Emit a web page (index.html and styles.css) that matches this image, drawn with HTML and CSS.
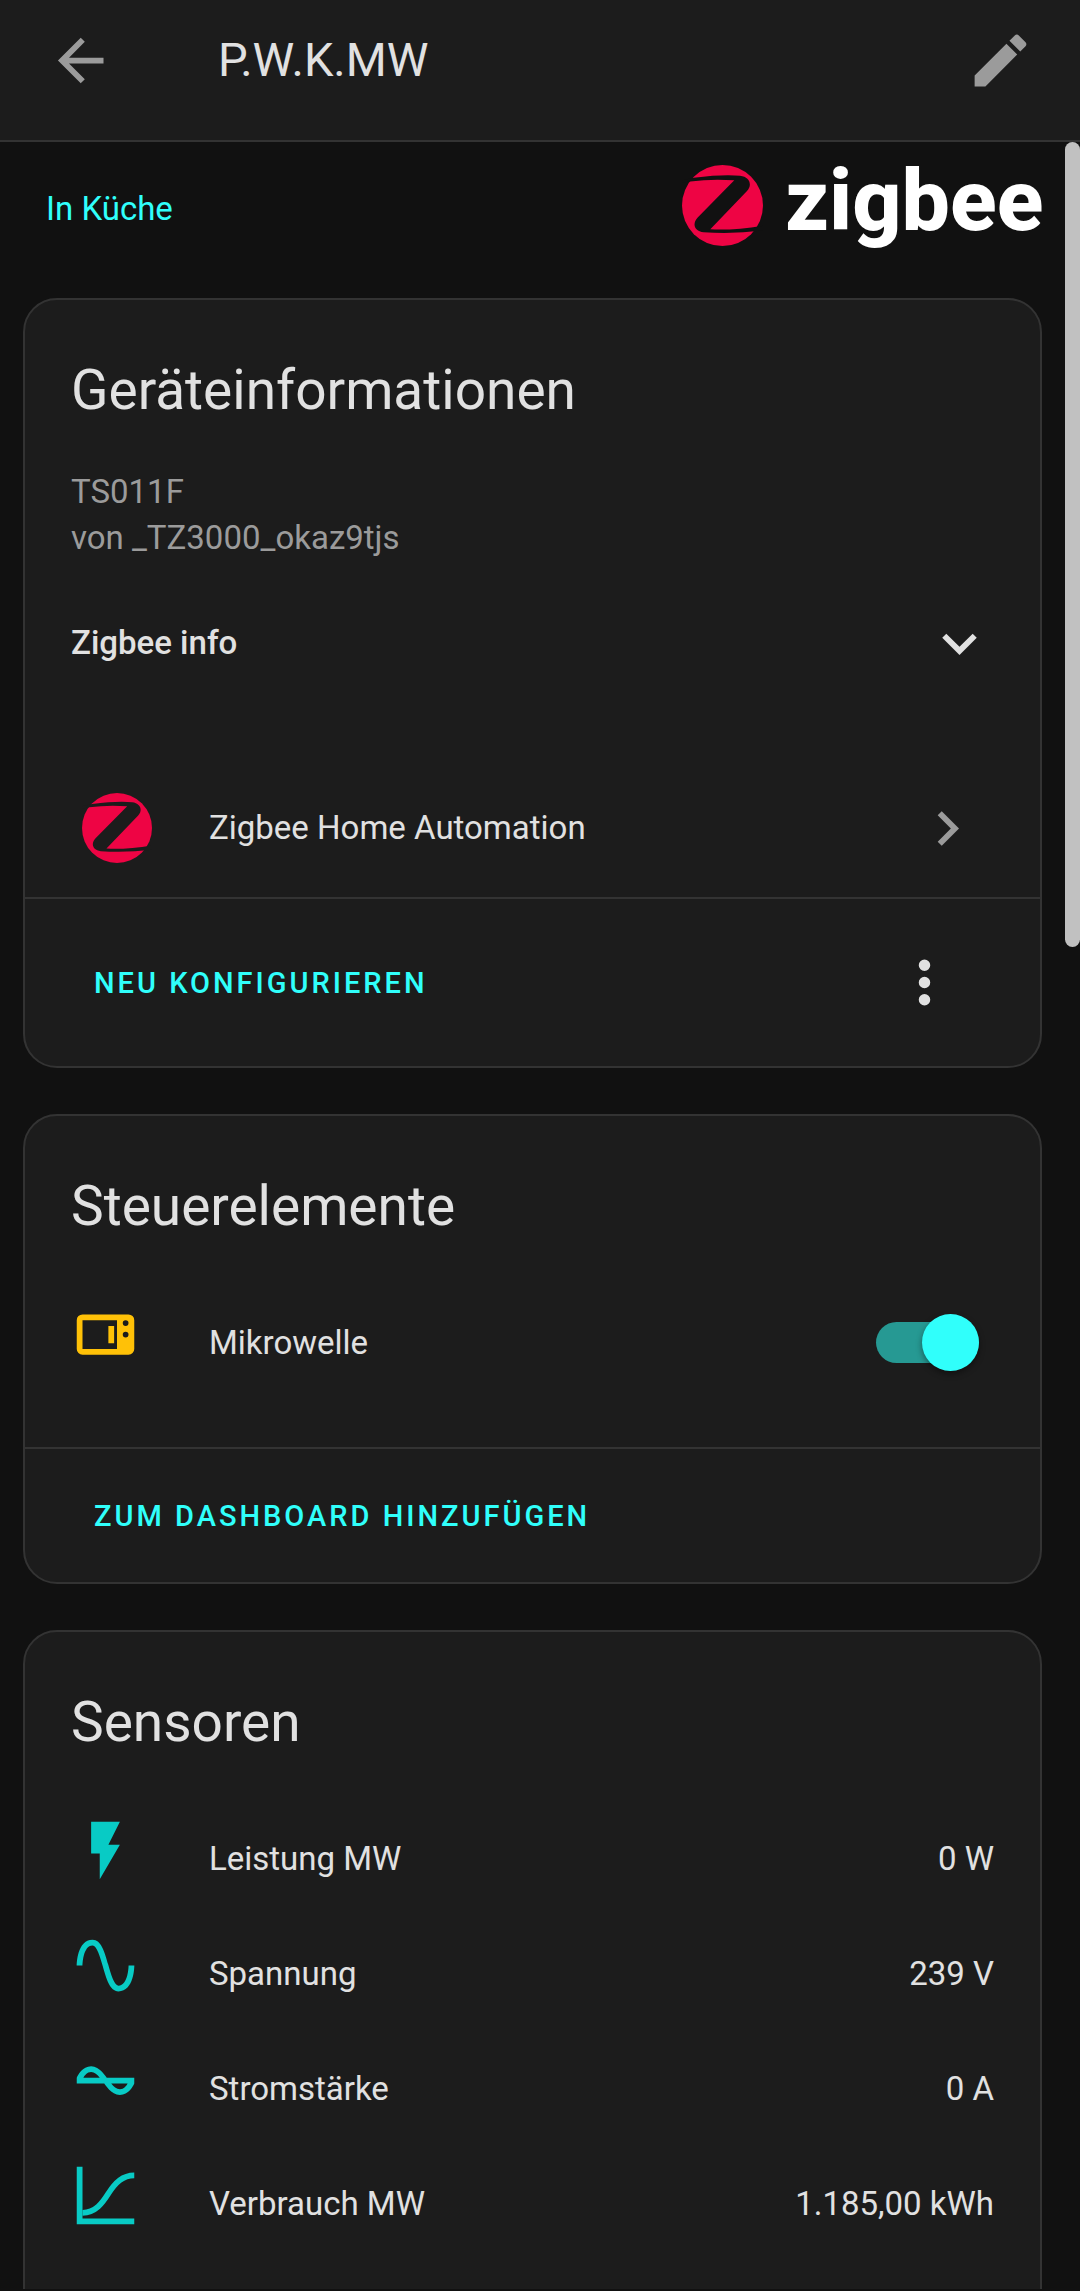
FILE: index.html
```html
<!DOCTYPE html>
<html lang="de">
<head>
  <meta charset="utf-8">
  <meta name="viewport" content="width=device-width, initial-scale=1">
  <title>P.W.K.MW</title>
  <link rel="stylesheet" href="styles.css">
</head>
<body>
  <svg class="symbols" aria-hidden="true">
    <symbol id="zigbee-mark" viewBox="0 0 81 81">
      <circle cx="40.5" cy="40.5" r="40.5" fill="#ee0444"/>
      <path fill="currentColor" d="M-1 15.500L11.700 12.700Q42 9 58 10.800C68 12 70.500 20 65 26L28.300 64.300Q52 65.500 82 60.500V65.500Q50 69.500 21.700 67.300C12 66 10 58.500 15.700 52.500L52.300 15.300Q30 13.500 8.300 16.500L-1 18Z"/>
    </symbol>
  </svg>

  <header class="toolbar">
    <button class="icon-button" type="button" aria-label="Zurück">
      <svg class="icon" viewBox="0 0 24 24"><path d="M20,11V13H8L13.5,18.5L12.08,19.92L4.16,12L12.08,4.08L13.5,5.5L8,11H20Z"/></svg>
    </button>
    <h1 class="toolbar-title">P.W.K.MW</h1>
    <button class="icon-button" type="button" aria-label="Bearbeiten">
      <svg class="icon" viewBox="0 0 24 24"><path d="M20.71,7.04C21.1,6.65 21.1,6 20.71,5.63L18.37,3.29C18,2.9 17.35,2.9 16.96,3.29L15.12,5.12L18.87,8.87M3,17.25V21H6.75L17.81,9.93L14.06,6.18L3,17.25Z"/></svg>
    </button>
  </header>

  <div class="viewport">
    <main class="content">
      <div class="device-header">
        <a class="area-link" href="#kueche">In Küche</a>
        <svg class="brand" viewBox="0 0 360 87" role="img" aria-label="zigbee">
          <use href="#zigbee-mark" width="81" height="81"/>
          <text class="brand-name" x="103" y="65">zigbee</text>
        </svg>
      </div>

      <section class="card">
        <h2 class="card-title">Geräteinformationen</h2>
        <div class="card-body">
          <p class="device-model">TS011F</p>
          <p class="device-model">von _TZ3000_okaz9tjs</p>
          <button class="expander" type="button" aria-expanded="false">
            <span>Zigbee info</span>
            <svg class="icon" viewBox="0 0 24 24"><path d="M7.41,8.58L12,13.17L16.59,8.58L18,10L12,16L6,10L7.41,8.58Z"/></svg>
          </button>
        </div>
        <a class="integration" href="#zha">
          <svg class="integration-logo" aria-hidden="true"><use href="#zigbee-mark"/></svg>
          <span class="label">Zigbee Home Automation</span>
          <svg class="icon" viewBox="0 0 24 24"><path d="M8.59,16.58L13.17,12L8.59,7.41L10,6L16,12L10,18L8.59,16.58Z"/></svg>
        </a>
        <footer class="card-actions">
          <button class="text-button" type="button">Neu konfigurieren</button>
          <button class="icon-button menu" type="button" aria-label="Menü">
            <svg class="icon" viewBox="0 0 24 24"><path d="M12,16A2,2 0 0,1 14,18A2,2 0 0,1 12,20A2,2 0 0,1 10,18A2,2 0 0,1 12,16M12,10A2,2 0 0,1 14,12A2,2 0 0,1 12,14A2,2 0 0,1 10,12A2,2 0 0,1 12,10M12,4A2,2 0 0,1 14,6A2,2 0 0,1 12,8A2,2 0 0,1 10,6A2,2 0 0,1 12,4Z"/></svg>
          </button>
        </footer>
      </section>

      <section class="card">
        <h2 class="card-title">Steuerelemente</h2>
        <div class="card-body">
          <div class="entity">
            <svg class="icon entity-icon on" viewBox="0 0 24 24"><path fill-rule="evenodd" d="M4,5A2,2 0 0,0 2,7V17A2,2 0 0,0 4,19H20A2,2 0 0,0 22,17V7A2,2 0 0,0 20,5H4M4,7H16V17H4V7M13,9V15H15V9H13M19,7A1,1 0 0,1 19,9A1,1 0 0,1 19,7M19,11A1,1 0 0,1 19,13A1,1 0 0,1 19,11Z"/></svg>
            <label class="label" for="mikrowelle">Mikrowelle</label>
            <input class="switch" id="mikrowelle" type="checkbox" role="switch" checked>
          </div>
        </div>
        <footer class="card-actions">
          <button class="text-button" type="button">Zum Dashboard hinzufügen</button>
        </footer>
      </section>

      <section class="card">
        <h2 class="card-title">Sensoren</h2>
        <ul class="card-body sensors">
          <li class="entity">
            <svg class="icon entity-icon" viewBox="0 0 24 24"><path d="M7,2V13H10V22L17,10H13L17,2H7Z"/></svg>
            <span class="label">Leistung MW</span>
            <span>0 W</span>
          </li>
          <li class="entity">
            <svg class="icon entity-icon" viewBox="0 0 24 24"><path d="M16.5,21C13.5,21 12.31,16.76 11.05,12.28C10.14,9.04 9,5 7.5,5C4.11,5 4,11.93 4,12H2C2,11.63 2.06,3 7.5,3C10.5,3 11.71,7.25 12.97,11.74C13.83,14.8 15,19 16.5,19C19.94,19 20.03,12.07 20.03,12H22.03C22.03,12.37 21.97,21 16.5,21Z"/></svg>
            <span class="label">Spannung</span>
            <span>239 V</span>
          </li>
          <li class="entity">
            <svg class="icon entity-icon" viewBox="0 0 24 24"><path d="M12.43,11C12.28,10.84 10,7 7,7S2.32,10.18 2,11V13H11.57C11.72,13.16 14,17 17,17S21.68,13.82 22,13V11H12.43M7,9C8.17,9 9.18,9.85 10,11H4.31C4.78,10.17 5.54,9 7,9M17,15C15.83,15 14.82,14.15 14,13H19.69C19.22,13.83 18.46,15 17,15Z"/></svg>
            <span class="label">Stromstärke</span>
            <span>0 A</span>
          </li>
          <li class="entity">
            <svg class="icon entity-icon" viewBox="0 0 24 24"><path d="M2,2H4V20H22V22H2Z"/><path fill="none" stroke="currentColor" stroke-width="2" d="M4,18C8.500,18 11,14.500 13,11.300C15.500,7.500 18,5 22,5"/></svg>
            <span class="label">Verbrauch MW</span>
            <span>1.185,00 kWh</span>
          </li>
        </ul>
      </section>
    </main>
    <div class="scrollbar" aria-hidden="true"><div class="scrollbar-thumb"></div></div>
  </div>
</body>
</html>
```
FILE: styles.css
```css
:root {
  --page: #111;
  --surface: #1c1c1c;
  --line: #333;
  --text: #e1e1e1;
  --muted: #9b9b9b;
  --accent: #30fffb;
  --accent-track: #269993;
  --sensor: #08cbc5;
  --amber: #ffc107;
}

* {
  box-sizing: border-box;
}

body {
  display: flex;
  flex-direction: column;
  height: 100vh;
  margin: 0;
  padding-bottom: 2px;
  overflow: hidden;
  background: var(--page);
  color: var(--text);
  font: 400 33px/46px Roboto, "Liberation Sans", sans-serif;
}

h1,
h2,
p,
ul {
  margin: 0;
  padding: 0;
  font-weight: 400;
  list-style: none;
}

a {
  color: inherit;
  text-decoration: none;
}

button {
  border: 0;
  padding: 0;
  background: none;
  color: inherit;
  font: inherit;
  cursor: pointer;
}

.symbols {
  position: absolute;
  width: 0;
  height: 0;
}

.icon {
  flex: none;
  display: block;
  width: 69px;
  height: 69px;
  fill: currentColor;
}

.label {
  flex: 1;
}

/* Toolbar */

.toolbar {
  flex: none;
  display: flex;
  align-items: center;
  padding: 0 11px 20px;
  min-height: 142px;
  border-bottom: 2px solid var(--line);
  background: var(--surface);
}

.toolbar-title {
  flex: 1;
  margin-left: 69px;
  font-size: 47px;
}

.icon-button {
  flex: none;
  display: grid;
  place-items: center;
  width: 138px;
  height: 120px;
  color: var(--muted);
}

/* Scrolling area */

.viewport {
  flex: 1;
  display: flex;
  min-height: 0;
}

.content {
  flex: 1;
  display: flex;
  flex-direction: column;
  gap: 46px;
  padding: 23px;
  overflow-y: auto;
  scrollbar-width: none;
}

.scrollbar {
  flex: none;
  width: 15px;
}

.scrollbar-thumb {
  height: calc(100% * 3 / 8);
  border-radius: 8px;
  background: #c1c1c1;
}

.device-header {
  flex: none;
  display: flex;
  align-items: center;
  justify-content: space-between;
  padding-left: 23px;
}

.area-link {
  color: var(--accent);
}

.brand {
  display: block;
  width: 360px;
  height: 87px;
  color: var(--page);
  overflow: visible;
}

.brand-name {
  fill: #fff;
  font-size: 86px;
  font-weight: 800;
}

/* Cards */

.card {
  flex: none;
  border: 2px solid var(--line);
  border-radius: 34px;
  background: var(--surface);
}

.card-title {
  padding: 45px 46px 0;
  font-size: 55px;
  line-height: 90px;
}

.card-body {
  padding: 34px 46px 47px;
}

.card-body.sensors {
  padding-bottom: 92px;
}

.device-model {
  color: var(--muted);
}

.expander {
  display: flex;
  align-items: center;
  justify-content: space-between;
  width: 100%;
  height: 138px;
  margin-top: 13px;
  font-weight: 500;
}

.integration {
  display: flex;
  align-items: center;
  height: 138px;
  padding: 0 58px 0 57px;
}

.integration .icon {
  color: var(--muted);
}

.integration-logo {
  width: 70px;
  height: 70px;
  margin-right: 57px;
  color: var(--surface);
}

.card-actions {
  display: flex;
  align-items: center;
  justify-content: space-between;
  padding: 14px 46px;
  border-top: 2px solid var(--line);
}

.text-button {
  height: 105px;
  padding: 0 23px;
  color: var(--accent);
  font-size: 29px;
  font-weight: 500;
  letter-spacing: 3px;
  text-transform: uppercase;
}

.menu {
  width: 139px;
  height: 139px;
  color: var(--text);
}

.entity {
  display: flex;
  align-items: center;
  height: 115px;
}

.entity-icon {
  margin: 0 69px 17px 0;
  color: var(--sensor);
}

.entity-icon.on {
  color: var(--amber);
}

.switch {
  appearance: none;
  display: flex;
  align-items: center;
  width: 103px;
  height: 41px;
  margin: 0 15px;
  border-radius: 21px;
  background: var(--line);
  cursor: pointer;
}

.switch::before {
  content: "";
  flex: none;
  width: 57px;
  height: 57px;
  border-radius: 50%;
  background: var(--muted);
  box-shadow: 0 3px 6px #0006;
}

.switch:checked {
  justify-content: flex-end;
  background: var(--accent-track);
}

.switch:checked::before {
  background: var(--accent);
}
```
